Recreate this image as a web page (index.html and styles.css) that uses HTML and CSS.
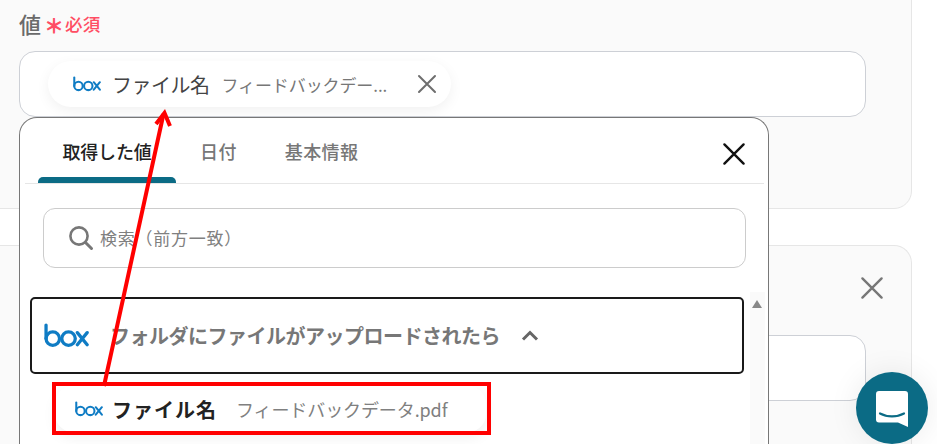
FILE: index.html
```html
<!DOCTYPE html>
<html lang="ja">
<head>
<meta charset="utf-8">
<title>値</title>
<link rel="stylesheet" href="styles.css">
</head>
<body>
<svg class="defs" width="0" height="0" aria-hidden="true">
  <symbol id="box" viewBox="0 0 44 24">
    <g fill="none" stroke="#0f7cc4" stroke-width="3.2" stroke-linecap="round">
      <path d="M2 1.8V15"/>
      <circle cx="8.6" cy="15" r="6.6"/>
      <circle cx="24" cy="15" r="6.6"/>
      <path d="M32.6 9.2l9.6 11.8M42.2 9.2l-9.6 11.8"/>
    </g>
  </symbol>
  <symbol id="x" viewBox="0 0 20 20">
    <path d="M2 2l16 16M18 2L2 18" fill="none" stroke="currentColor" stroke-width="2" stroke-linecap="round"/>
  </symbol>
</svg>
<main class="page">
  <section class="card card-top">
    <div class="label"><span class="label-text">値</span><span class="req-star">＊</span><span class="req">必須</span></div>
    <div class="field">
      <div class="chip">
        <svg class="chip-logo"><use href="#box"/></svg>
        <span class="chip-name">ファイル名</span>
        <span class="chip-value">フィードバックデー...</span>
        <svg class="chip-x"><use href="#x"/></svg>
      </div>
    </div>
  </section>
  <section class="card card-bottom">
    <div class="card-close"><svg class="card-x"><use href="#x"/></svg></div>
    <div class="field field-lower"></div>
  </section>
</main>

<div class="popover">
  <div class="tabs">
    <div class="tab tab-active">取得した値</div>
    <div class="tab">日付</div>
    <div class="tab">基本情報</div>
    <svg class="pop-x"><use href="#x"/></svg>
  </div>
  <div class="pop-body">
    <div class="search">
      <svg class="search-icon" viewBox="0 0 26 26"><circle cx="11" cy="11" r="8.6" fill="none" stroke="#777" stroke-width="2.6"/><path d="M17.5 17.5l6 6" stroke="#777" stroke-width="3" stroke-linecap="round"/></svg>
      <span class="search-text">検索（前方一致）</span>
    </div>
    <div class="list">
      <div class="group">
        <svg class="group-logo"><use href="#box"/></svg>
        <span class="group-title">フォルダにファイルがアップロードされたら</span>
        <svg class="chev" viewBox="0 0 18 11"><path d="M2 9.500l7-7 7 7" fill="none" stroke="#666" stroke-width="3"/></svg>
      </div>
      <div class="item">
        <svg class="item-logo"><use href="#box"/></svg>
        <span class="item-name">ファイル名</span>
        <span class="item-value">フィードバックデータ.pdf</span>
      </div>
    </div>
    <div class="scrollbar"><span class="scroll-up"></span></div>
  </div>
</div>

<div class="highlight"></div>
<svg class="arrow" viewBox="0 0 937 444" aria-hidden="true">
  <path d="M104 386L163.500 114" fill="none" stroke="#f00" stroke-width="4"/>
  <path d="M156 124L164.500 113L170 126" fill="none" stroke="#f00" stroke-width="4"/>
</svg>

<div class="chat">
  <svg class="chat-icon" viewBox="0 0 32 36"><path d="M3 0h26a3 3 0 0 1 3 3v33l-10-4.500H3a3 3 0 0 1-3-3V3a3 3 0 0 1 3-3z" fill="#fff"/><path d="M4 22.500c7 3.800 17 3.800 24 0" fill="none" stroke="#0b6b85" stroke-width="2.200" stroke-linecap="round"/></svg>
</div>
</body>
</html>
```
FILE: styles.css
```css
* { box-sizing: border-box; }
html, body { margin: 0; height: 100%; }
body {
  position: relative;
  width: 937px;
  height: 444px;
  overflow: hidden;
  background: #fff;
  font-family: "Noto Sans CJK JP", "Noto Sans", sans-serif;
  color: #333;
}
.defs { position: absolute; }
.page { display: flex; flex-direction: column; gap: 36px; margin-top: -21px; margin-left: -21px; width: 933px; }
.card { background: #fafafa; border: 1px solid #e6e6e6; border-radius: 18px; padding: 0 0 0 39px; }
.card-top { height: 230px; padding-top: 28px; }
.card-bottom { height: 199px; position: relative; border-bottom: 0; border-radius: 18px 18px 0 0; }
.label { display: flex; align-items: center; height: 30px; color: #666; }
.label-text { font-size: 22px; font-weight: 500; color: #6a6a6a; }
.req-star { color: #ff4d63; font-size: 20px; font-weight: 900; margin-left: 3px; width: 21px; position: relative; top: 2px; }
.req { color: #ff4d63; font-size: 17.5px; font-weight: 500; letter-spacing: .3px; }
.field { width: 847px; height: 66px; margin-top: 13px; background: #fff; border: 1px solid #cdd0d6; border-radius: 16px; padding: 9px 0 0 28px; }
.field-lower { position: absolute; top: 89px; left: 39px; margin: 0; }
.chip { display: flex; align-items: center; width: 403px; height: 46px; background: #fff; border-radius: 23px; box-shadow: 0 4px 14px rgba(0,0,0,.06); padding: 0 14px 0 25px; }
.chip-logo { width: 28px; height: 16px; }
.chip-name { font-size: 20px; margin-left: 11px; color: #444; white-space: nowrap; letter-spacing: -.5px; }
.chip-value { font-size: 17px; margin-left: 12px; color: #777; white-space: nowrap; letter-spacing: -.1px; }
.chip-x { width: 20px; height: 20px; margin-left: auto; color: #6e6e6e; }
.card-close { display: flex; justify-content: flex-end; padding: 30px 27px 0 0; }
.card-x { width: 24px; height: 24px; color: #777; }
.popover { position: absolute; left: 19px; top: 117px; width: 750px; height: 327px; background: #fff; border: 1px solid #777; border-bottom: 0; border-radius: 18px 18px 0 0; padding-left: 5px; padding-right: 4px; overflow: hidden; }
.tabs { display: flex; height: 66px; border-bottom: 1px solid #e6e6e6; padding-left: 13px; position: relative; align-items: stretch; }
.tab { width: 138px; font-size: 18px; font-weight: 500; color: #777; text-align: center; padding-top: 20px; letter-spacing: -.2px; }
.tab + .tab { width: auto; padding-left: 24px; padding-right: 24px; letter-spacing: .4px; }
.tab-active { color: #222; position: relative; }
.tab-active::after { content: ""; position: absolute; left: 0; right: 0; bottom: 0; height: 6px; background: #0b6b85; border-radius: 5px 5px 0 0; }
.pop-x { width: 24px; height: 24px; position: absolute; right: 18px; top: 24px; color: #111; }
.pop-body { position: relative; }
.search { display: flex; align-items: center; gap: 6px; margin: 24px 0 0 18px; width: 703px; height: 60px; border: 1px solid #ccc; border-radius: 12px; padding: 0 0 0 24px; color: #808080; font-size: 17px; letter-spacing: .75px; }
.search-icon { width: 26px; height: 26px; }
.search-text { position: relative; top: -1px; }
.list { margin: 29px 0 0 5px; width: 714px; }
.group { display: flex; align-items: center; height: 77px; border: 2px solid #1a1a1a; border-radius: 5px; padding-left: 12px; background: #fff; }
.group-logo { width: 45px; height: 25px; }
.group-title { font-size: 20px; font-weight: 700; color: #777; margin-left: 21px; white-space: nowrap; letter-spacing: -.5px; }
.chev { width: 18px; height: 11px; margin-left: 21px; }
.item { display: flex; align-items: center; margin: 12px 0 0 25px; width: 431px; height: 46px; border-radius: 18px; background: #fff; box-shadow: 0 6px 14px rgba(0,0,0,.06); padding-left: 20px; }
.item-logo { width: 28px; height: 16px; }
.item-name { font-size: 20px; font-weight: 700; color: #222; margin-left: 9px; white-space: nowrap; letter-spacing: 1px; }
.item-value { font-size: 18px; color: #808080; margin-left: 19px; white-space: nowrap; letter-spacing: -.1px; }
.scrollbar { position: absolute; left: 725px; top: 84px; width: 15px; height: 152px; background: #fafafa; }
.scroll-up { position: absolute; left: 2px; top: 8px; border: 5px solid transparent; border-top: 0; border-bottom: 8px solid #888; }
.highlight { position: absolute; left: 52px; top: 382px; width: 439px; height: 53px; border: 4px solid #f00; }
.arrow { position: absolute; left: 0; top: 0; width: 937px; height: 444px; pointer-events: none; }
.chat { position: absolute; left: 856px; top: 372px; width: 72px; height: 72px; border-radius: 50%; background: #0b6b85; display: flex; align-items: center; justify-content: center; box-shadow: 0 0 30px rgba(0,0,0,.08); }
.chat-icon { width: 32px; height: 36px; margin-top: 2px; }
```
